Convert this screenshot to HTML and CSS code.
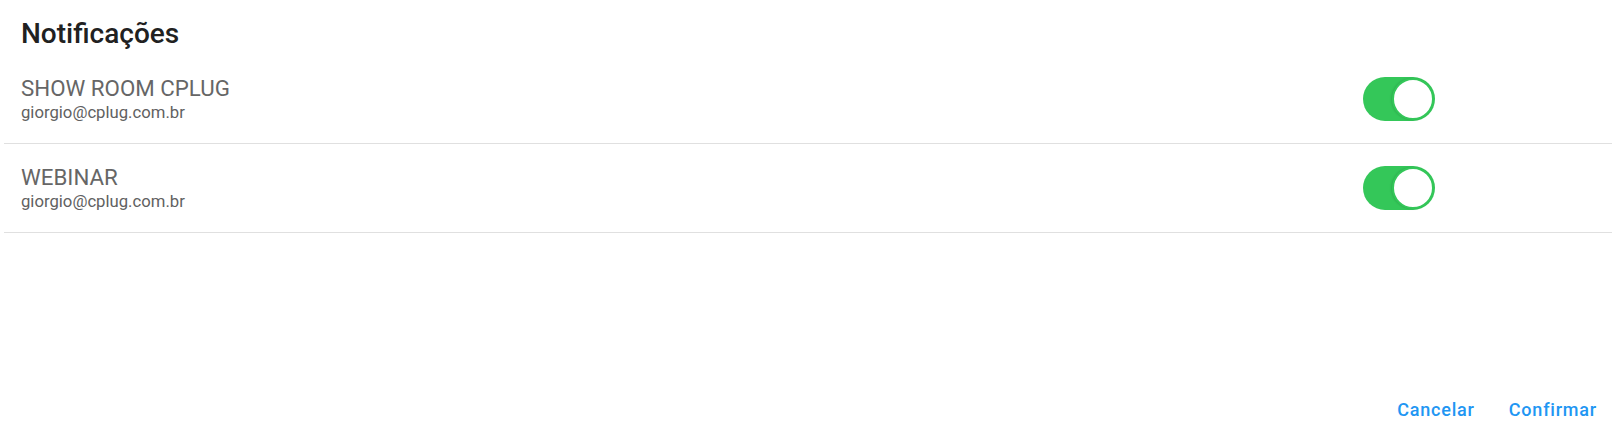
FILE: index.html
```html
<!DOCTYPE html>
<html lang="pt-BR">
<head>
<meta charset="utf-8">
<title>Notificações</title>
<link rel="stylesheet" href="styles.css">
</head>
<body>
<div class="dialog">
  <h2 class="dialog-title">Notificações</h2>
  <ul class="list">
    <li class="list-item">
      <div class="item-text">
        <div class="item-primary">SHOW ROOM CPLUG</div>
        <div class="item-secondary">giorgio@cplug.com.br</div>
      </div>
      <span class="switch switch-on"><span class="knob"></span></span>
    </li>
    <li class="list-item">
      <div class="item-text">
        <div class="item-primary">WEBINAR</div>
        <div class="item-secondary">giorgio@cplug.com.br</div>
      </div>
      <span class="switch switch-on"><span class="knob"></span></span>
    </li>
  </ul>
  <div class="actions">
    <button class="btn">Cancelar</button>
    <button class="btn">Confirmar</button>
  </div>
</div>
</body>
</html>
```
FILE: styles.css
```css
* { box-sizing: border-box; }
html, body { margin: 0; padding: 0; background: #fff; }
body { font-family: Roboto, "Noto Sans", sans-serif; width: 1617px; height: 445px; overflow: hidden; }
.dialog { display: flex; flex-direction: column; height: 445px; }
.dialog-title {
  margin: 0;
  padding: 18px 21px 0;
  height: 55px;
  font-size: 28px;
  font-weight: 500;
  line-height: 32px;
  color: #212121;
}
.list { list-style: none; margin: 0 5px 0 4px; padding: 0; }
.list-item {
  display: flex;
  align-items: center;
  justify-content: space-between;
  height: 89px;
  padding: 0 177px 0 17px;
  border-bottom: 1px solid #e0e0e0;
}
.item-text { display: flex; flex-direction: column; padding-top: 1px; }
.item-primary { font-size: 22.3px; line-height: 25px; color: #666; }
.item-secondary { font-size: 16.7px; line-height: 20px; margin-top: 2px; color: #616161; }
.switch {
  position: relative;
  display: inline-block;
  width: 72px;
  height: 44px;
  border-radius: 22px;
  background: #34c759;
}
.knob {
  position: absolute;
  top: 1px;
  right: 1px;
  width: 42px;
  height: 42px;
  border-radius: 50%;
  background: #fff;
  border: 2px solid #34c759;
  box-shadow: -1px 0 2px rgba(0,0,0,0.12);
}
.actions {
  margin-top: auto;
  display: flex;
  justify-content: flex-end;
  gap: 2px;
  padding: 0 4px 17px 0;
}
.btn {
  font-family: Roboto, "Noto Sans", sans-serif;
  font-size: 18px;
  font-weight: 500;
  letter-spacing: 0.8px;
  color: #2196f3;
  background: none;
  border: none;
  padding: 8px 16px;
  line-height: 20px;
  cursor: pointer;
}
```
